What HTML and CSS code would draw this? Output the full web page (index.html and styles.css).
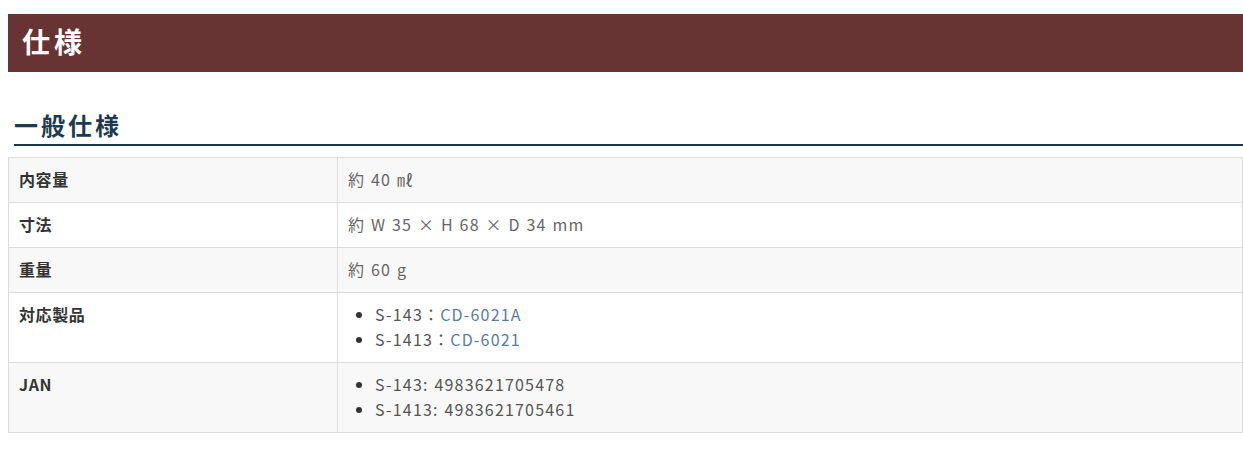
FILE: index.html
```html
<!DOCTYPE html>
<html lang="ja">
<head>
<meta charset="utf-8">
<title>仕様</title>
<link rel="stylesheet" href="styles.css">
</head>
<body>
<div class="page">
  <h1 class="title-bar">仕様</h1>
  <h2 class="section-title">一般仕様</h2>
  <table class="spec">
    <tbody>
      <tr class="odd">
        <th>内容量</th>
        <td>約 40 ㎖</td>
      </tr>
      <tr>
        <th>寸法</th>
        <td>約 W 35 × H 68 × D 34 mm</td>
      </tr>
      <tr class="odd">
        <th>重量</th>
        <td>約 60 g</td>
      </tr>
      <tr>
        <th>対応製品</th>
        <td>
          <ul class="list">
            <li>S-143：<a href="#">CD-6021A</a></li>
            <li>S-1413：<a href="#">CD-6021</a></li>
          </ul>
        </td>
      </tr>
      <tr class="odd">
        <th>JAN</th>
        <td>
          <ul class="list">
            <li>S-143: 4983621705478</li>
            <li>S-1413: 4983621705461</li>
          </ul>
        </td>
      </tr>
    </tbody>
  </table>
</div>
</body>
</html>
```
FILE: styles.css
```css
html, body {
  margin: 0;
  padding: 0;
  background: #fff;
}
body {
  font-family: "Noto Sans CJK JP", "Noto Sans", sans-serif;
  color: #333;
}
.page {
  padding: 14px 0 0 8px;
}
.title-bar {
  margin: 0;
  height: 58px;
  background: #673433;
  color: #fff;
  font-size: 28px;
  font-weight: 700;
  letter-spacing: 4px;
  line-height: 54px;
  padding: 0 0 4px 14px;
  box-sizing: border-box;
}
.section-title {
  margin: 36px 0 0 6px;
  padding: 0 0 3px 0;
  font-size: 24px;
  font-weight: 700;
  letter-spacing: 3px;
  line-height: 33px;
  color: #1e3a51;
  border-bottom: 2px solid #1d3445;
}
.spec {
  margin-top: 11px;
  width: 100%;
  border-collapse: collapse;
  font-size: 16px;
  letter-spacing: 1.2px;
  word-spacing: 1px;
}
.spec th,
.spec td {
  border: 1px solid #dcdcdc;
  padding: 9px 10px 10px 10px;
  line-height: 25px;
  vertical-align: top;
  text-align: left;
}
.spec th {
  width: 308px;
  font-weight: 700;
  color: #333;
  letter-spacing: 0.6px;
}
.spec td {
  color: #666;
  font-weight: 400;
}
.spec tr.odd th,
.spec tr.odd td {
  background: #f8f8f8;
}
.list {
  margin: 0;
  padding-left: 27px;
  list-style: disc;
}
.list li {
  line-height: 25px;
  color: #555;
}
.list li::marker {
  color: #333;
}
.list a {
  color: #5a7ca3;
  text-decoration: none;
}
```
